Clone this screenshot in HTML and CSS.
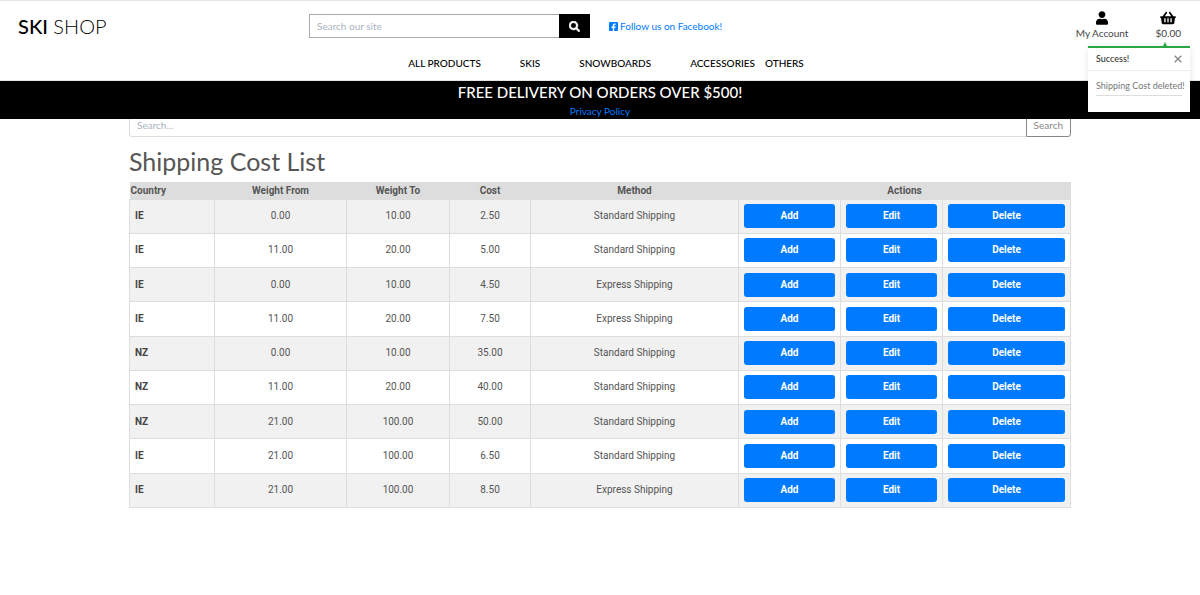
FILE: index.html
```
<!DOCTYPE html>
<html lang="en">
<head>
<meta charset="utf-8">
<meta name="viewport" content="width=device-width, initial-scale=1">
<title>Ski Shop - Shipping Cost List</title>
<link rel="stylesheet" href="styles.css">
</head>
<body>
<header class="site-header">
  <div class="top-row">
    <a class="logo" href="#"><strong>SKI</strong> SHOP</a>
    <form class="site-search">
      <input type="text" class="site-search-input" placeholder="Search our site" aria-label="Search our site">
      <button type="submit" class="site-search-button" aria-label="Search">
        <svg viewBox="0 0 512 512" width="11" height="11" aria-hidden="true"><path fill="currentColor" stroke="currentColor" stroke-width="24" d="M505 442.700 405.300 343c-4.500-4.500-10.600-7-17-7H372c27.600-35.300 44-79.700 44-128C416 93.100 322.900 0 208 0S0 93.100 0 208s93.100 208 208 208c48.300 0 92.700-16.400 128-44v16.300c0 6.400 2.500 12.500 7 17l99.700 99.700c9.400 9.400 24.600 9.400 33.900 0l28.300-28.300c9.400-9.400 9.400-24.600.1-34zM208 336c-70.700 0-128-57.200-128-128 0-70.700 57.200-128 128-128 70.700 0 128 57.200 128 128 0 70.700-57.200 128-128 128z"/></svg>
      </button>
    </form>
    <a class="facebook" href="#">
      <svg viewBox="0 0 448 512" width="9" height="11" aria-hidden="true"><path fill="currentColor" d="M400 32H48A48 48 0 0 0 0 80v352a48 48 0 0 0 48 48h137.250V327.690h-63V256h63v-54.640c0-62.150 37-96.480 93.670-96.480 27.140 0 55.520 4.840 55.520 4.840v61h-31.270c-30.810 0-40.420 19.120-40.420 38.730V256h68.780l-11 71.690h-57.780V480H400a48 48 0 0 0 48-48V80a48 48 0 0 0-48-48z"/></svg>
      <span>Follow us on Facebook!</span>
    </a>
    <div class="user-links">
      <a class="user-link" href="#">
        <svg viewBox="0 0 448 512" width="12" height="14" aria-hidden="true"><path d="M224 256c70.700 0 128-57.300 128-128S294.700 0 224 0 96 57.300 96 128s57.300 128 128 128zm89.600 32h-16.700c-22.200 10.200-46.900 16-72.900 16s-50.600-5.800-72.900-16h-16.700C60.200 288 0 348.200 0 422.400V464c0 26.500 21.500 48 48 48h352c26.500 0 48-21.500 48-48v-41.600c0-74.200-60.200-134.400-134.400-134.400z"/></svg>
        <span>My Account</span>
      </a>
      <div class="basket">
        <a class="user-link" href="#">
          <svg viewBox="0 0 576 512" width="16" height="14" aria-hidden="true"><path d="M576 216v16c0 13.255-10.745 24-24 24h-8l-26.113 182.788C514.509 462.435 494.257 480 470.370 480H105.630c-23.887 0-44.139-17.565-47.518-41.212L32 256h-8c-13.255 0-24-10.745-24-24v-16c0-13.255 10.745-24 24-24h67.341l106.780-146.821c10.395-14.292 30.407-17.453 44.701-7.058 14.293 10.395 17.453 30.408 7.058 44.701L170.477 192h235.046L326.120 82.821c-10.395-14.292-7.234-34.306 7.059-44.701 14.291-10.395 34.306-7.235 44.701 7.058L484.659 192H552c13.255 0 24 10.745 24 24zM312 392V280c0-13.255-10.745-24-24-24s-24 10.745-24 24v112c0 13.255 10.745 24 24 24s24-10.745 24-24zm112 0V280c0-13.255-10.745-24-24-24s-24 10.745-24 24v112c0 13.255 10.745 24 24 24s24-10.745 24-24zm-224 0V280c0-13.255-10.745-24-24-24s-24 10.745-24 24v112c0 13.255 10.745 24 24 24s24-10.745 24-24z"/></svg>
          <span>$0.00</span>
        </a>
        <div class="toast" role="status">
          <div class="toast-head">
            <strong>Success!</strong>
            <button type="button" class="toast-close" aria-label="Close">
              <svg viewBox="0 0 8 8" width="8" height="8" aria-hidden="true"><path d="M.7.700 7.300 7.300M7.300.700.700 7.300" stroke="currentColor" stroke-width="1.400" fill="none"/></svg>
            </button>
          </div>
          <p class="toast-text">Shipping Cost deleted!</p>
        </div>
      </div>
    </div>
  </div>
  <nav class="main-nav">
    <a href="#">ALL PRODUCTS</a>
    <a href="#">SKIS</a>
    <a href="#">SNOWBOARDS</a>
    <div class="nav-pair">
      <a href="#">ACCESSORIES</a>
      <a href="#">OTHERS</a>
    </div>
  </nav>
</header>
<div class="banner">
  <h4 class="banner-title">FREE DELIVERY ON ORDERS OVER $500!</h4>
  <a class="banner-link" href="#">Privacy Policy</a>
</div>
<main class="content">
  <form class="list-search">
    <input type="text" class="list-search-input" placeholder="Search..." aria-label="Search shipping costs">
    <button type="submit" class="list-search-button">Search</button>
  </form>
  <h1 class="page-title">Shipping Cost List</h1>
  <table class="costs">
    <colgroup>
      <col class="c-country"><col class="c-from"><col class="c-to"><col class="c-cost"><col class="c-method"><col class="c-action"><col class="c-action"><col class="c-delete">
    </colgroup>
    <thead>
      <tr><th scope="col" class="first">Country</th><th scope="col">Weight From</th><th scope="col">Weight To</th><th scope="col">Cost</th><th scope="col">Method</th><th scope="colgroup" colspan="3">Actions</th></tr>
    </thead>
    <tbody>
      <tr><th scope="row">IE</th><td>0.00</td><td>10.00</td><td>2.50</td><td>Standard Shipping</td><td><button type="button" class="btn">Add</button></td><td><button type="button" class="btn">Edit</button></td><td><button type="button" class="btn">Delete</button></td></tr>
      <tr><th scope="row">IE</th><td>11.00</td><td>20.00</td><td>5.00</td><td>Standard Shipping</td><td><button type="button" class="btn">Add</button></td><td><button type="button" class="btn">Edit</button></td><td><button type="button" class="btn">Delete</button></td></tr>
      <tr><th scope="row">IE</th><td>0.00</td><td>10.00</td><td>4.50</td><td>Express Shipping</td><td><button type="button" class="btn">Add</button></td><td><button type="button" class="btn">Edit</button></td><td><button type="button" class="btn">Delete</button></td></tr>
      <tr><th scope="row">IE</th><td>11.00</td><td>20.00</td><td>7.50</td><td>Express Shipping</td><td><button type="button" class="btn">Add</button></td><td><button type="button" class="btn">Edit</button></td><td><button type="button" class="btn">Delete</button></td></tr>
      <tr><th scope="row">NZ</th><td>0.00</td><td>10.00</td><td>35.00</td><td>Standard Shipping</td><td><button type="button" class="btn">Add</button></td><td><button type="button" class="btn">Edit</button></td><td><button type="button" class="btn">Delete</button></td></tr>
      <tr><th scope="row">NZ</th><td>11.00</td><td>20.00</td><td>40.00</td><td>Standard Shipping</td><td><button type="button" class="btn">Add</button></td><td><button type="button" class="btn">Edit</button></td><td><button type="button" class="btn">Delete</button></td></tr>
      <tr><th scope="row">NZ</th><td>21.00</td><td>100.00</td><td>50.00</td><td>Standard Shipping</td><td><button type="button" class="btn">Add</button></td><td><button type="button" class="btn">Edit</button></td><td><button type="button" class="btn">Delete</button></td></tr>
      <tr><th scope="row">IE</th><td>21.00</td><td>100.00</td><td>6.50</td><td>Standard Shipping</td><td><button type="button" class="btn">Add</button></td><td><button type="button" class="btn">Edit</button></td><td><button type="button" class="btn">Delete</button></td></tr>
      <tr><th scope="row">IE</th><td>21.00</td><td>100.00</td><td>8.50</td><td>Express Shipping</td><td><button type="button" class="btn">Add</button></td><td><button type="button" class="btn">Edit</button></td><td><button type="button" class="btn">Delete</button></td></tr>
    </tbody>
  </table>
</main>
</body>
</html>
```
FILE: styles.css
```
* { box-sizing: border-box; }

body {
  margin: 0;
  background: #fff;
  color: #555;
  font: 10px/16px Lato, "Liberation Sans", sans-serif;
}

a { color: #007bff; text-decoration: none; }
button, input { font: inherit; }
button { cursor: pointer; }
svg { display: block; }

.site-header {
  position: relative;
  z-index: 2;
  border-top: 1px solid #e5e5e5;
  border-bottom: 1px solid #e5e5e5;
  background: #fff;
}

.top-row {
  display: grid;
  grid-template-columns: repeat(4, 1fr);
  align-items: center;
  height: 50px;
}

.logo {
  padding-left: 18px;
  color: #000;
  font-size: 20px;
  font-weight: 300;
  line-height: 24px;
}
.logo strong { font-weight: 500; }

.site-search { display: flex; padding: 0 10px 0 9px; }
.site-search-input {
  flex: 1;
  min-width: 0;
  height: 24px;
  padding: 0 7px;
  border: 1px solid #aaa;
  border-right: 0;
  border-radius: 0;
  color: #555;
}
.site-search-button {
  display: grid;
  place-items: center;
  width: 31px;
  height: 24px;
  padding: 0;
  border: 0;
  background: #000;
  color: #fff;
}
::placeholder { color: #a9b4bf; opacity: 1; }

.facebook { display: flex; align-items: center; gap: 2px; padding-left: 9px; }

.user-links {
  display: flex;
  justify-content: flex-end;
  gap: 27px;
  padding-right: 19px;
}
.user-link {
  display: flex;
  flex-direction: column;
  align-items: center;
  color: #444;
}
.user-link svg { fill: #000; }
.basket { position: relative; }

.toast {
  position: absolute;
  top: 35px;
  right: -9px;
  width: 102px;
  height: 66px;
  border-top: 2px solid #28a745;
  background: #fff;
  box-shadow: 0 2px 8px rgba(0, 0, 0, 0.1);
  font-size: 9px;
}
.toast::before {
  content: "";
  position: absolute;
  right: 22px;
  bottom: 100%;
  border: 3px solid transparent;
  border-top: 0;
  border-bottom: 6px solid #28a745;
}
.toast-head {
  display: flex;
  align-items: center;
  justify-content: space-between;
  height: 23px;
  padding: 0 8px;
  border-bottom: 1px solid #eee;
  color: #333;
}
.toast-head strong { font-weight: 500; }
.toast-close { padding: 0; border: 0; background: none; color: #888; }
.toast-text {
  margin: 7px 8px 0;
  padding-bottom: 1px;
  border-bottom: 1px solid #ddd;
  color: #777;
  white-space: nowrap;
}

.main-nav {
  display: flex;
  justify-content: center;
  gap: 39px;
  padding: 4px 0 9px 12px;
}
.main-nav a { color: #000; font-weight: 500; }
.nav-pair { display: flex; gap: 10px; }

.banner {
  position: relative;
  z-index: 1;
  background: #000;
  text-align: center;
}
.banner-title {
  margin: 0;
  color: #fff;
  font-size: 15px;
  font-weight: 500;
  line-height: 22px;
}
.banner-link { display: block; }

.content { max-width: 942px; margin: 0 auto; }

/* The banner covers the top edge of the search bar */
.list-search { display: flex; margin-top: -11px; }
.list-search-input {
  flex: 1;
  min-width: 0;
  height: 29px;
  padding: 8px 7px 4px;
  border: 1px solid #ddd;
  border-right: 0;
  border-radius: 0 0 0 3px;
}
.list-search-button {
  height: 29px;
  padding: 8px 7px 4px;
  border: 1px solid #888;
  border-radius: 0 3px 3px 0;
  background: #fff;
  color: #888;
}

.page-title {
  margin: 9px 0 6px;
  color: #555;
  font-size: 25px;
  font-weight: 400;
  line-height: 30px;
}

.costs {
  width: 100%;
  height: 326px;
  table-layout: fixed;
  border-collapse: collapse;
  font: 10px/14px Roboto, "Liberation Sans", sans-serif;
  text-align: center;
}
.c-country { width: 85px; }
.c-from { width: 132px; }
.c-to { width: 103px; }
.c-cost { width: 81px; }
.c-method { width: 208px; }
.c-action { width: 102px; }
.c-delete { width: 128px; }

.costs thead tr { height: 17px; background: #ddd; }
.costs thead th { padding: 1px 1px 0; color: #555; }
.costs thead .first { text-align: left; }
.costs tbody tr:nth-child(odd) { background: #f1f1f1; }
.costs tbody th, .costs tbody td {
  padding: 4px 5px;
  border: 1px solid #ddd;
}
.costs tbody th { color: #444; text-align: left; }

.btn {
  display: block;
  width: 100%;
  height: 24px;
  padding: 0;
  border: 0;
  border-radius: 3px;
  background: #007bff;
  color: #fff;
  font-weight: 700;
}
```
